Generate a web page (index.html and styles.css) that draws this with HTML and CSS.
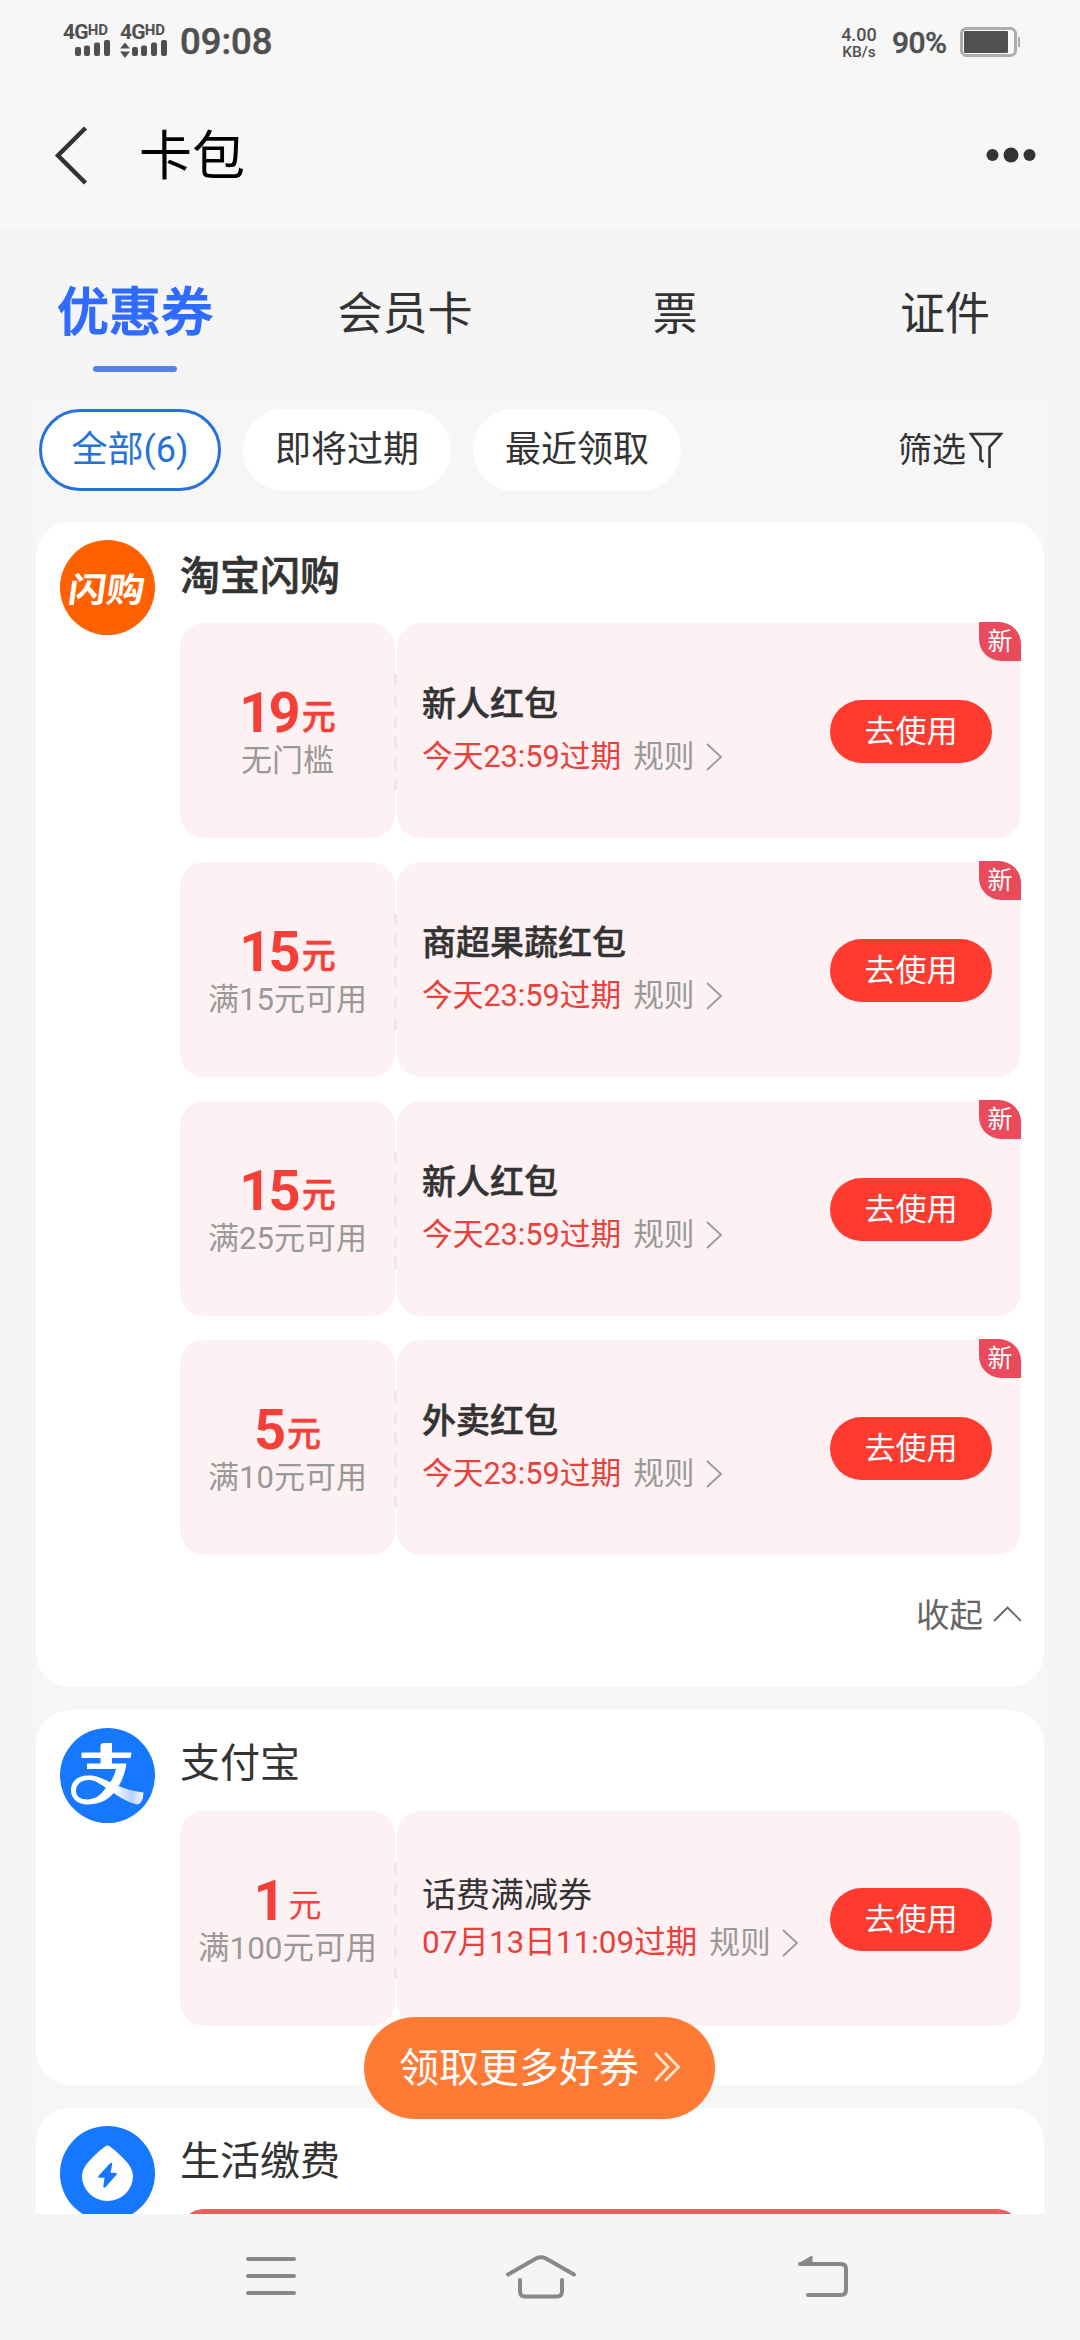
FILE: index.html
```html
<!DOCTYPE html>
<html lang="zh-CN">
<head>
<meta charset="utf-8">
<title>卡包</title>
<link rel="stylesheet" href="styles.css">
</head>
<body>
<div class="screen">
  <header class="status">
    <div class="sim">
      <div class="net">4G<span class="hd">HD</span></div>
      <svg class="bars" width="49" height="18" viewBox="0 0 49 18"><g fill="#505050"><rect x="12" y="7" width="6" height="9" rx="2"/><rect x="21" y="5.500" width="6" height="10.500" rx="2"/><rect x="31" y="2.500" width="6" height="13.500" rx="2"/><rect x="41" y="0" width="6" height="16" rx="2"/></g></svg>
    </div>
    <div class="sim">
      <div class="net">4G<span class="hd">HD</span></div>
      <svg class="bars" width="49" height="18" viewBox="0 0 49 18"><g fill="#505050"><path d="M0 8.500L5 2.500L10 8.500ZM0 11.500H10L5 18Z"/><rect x="12" y="7" width="6" height="9" rx="2"/><rect x="21" y="5.500" width="6" height="10.500" rx="2"/><rect x="31" y="2.500" width="6" height="13.500" rx="2"/><rect x="41" y="0" width="6" height="16" rx="2"/></g></svg>
    </div>
    <div class="time">09:08</div>
    <div class="speed"><span class="rate">4.00</span><span class="unit">KB/s</span></div>
    <div class="percent">90%</div>
    <svg class="battery" width="61" height="30" viewBox="0 0 61 30"><rect x="1.500" y="1.500" width="54" height="27" rx="5" fill="#fafafa" stroke="#adadad" stroke-width="3"/><rect x="4" y="4" width="44" height="22" rx="1" fill="#505050"/><rect x="58" y="10" width="2" height="10" fill="#adadad"/></svg>
  </header>

  <nav class="titlebar">
    <svg width="36" height="60" viewBox="0 0 36 60"><path d="M32.500 3L5 30.500L32.500 58" fill="none" stroke="#333" stroke-width="4.500"/></svg>
    <h1>卡包</h1>
    <svg class="more" width="50" height="16" viewBox="0 0 50 16"><g fill="#333"><circle cx="6.500" cy="8" r="6"/><circle cx="25" cy="8" r="7.500"/><circle cx="43.500" cy="8" r="6"/></g></svg>
  </nav>

  <div class="tabs">
    <div class="tab active">优惠券</div>
    <div class="tab">会员卡</div>
    <div class="tab">票</div>
    <div class="tab">证件</div>
  </div>

  <main class="content">
    <div class="filters">
      <div class="chip chosen">全部(6)</div>
      <div class="chip">即将过期</div>
      <div class="chip">最近领取</div>
      <div class="filter"><span>筛选</span><svg width="34" height="38" viewBox="0 0 34 38"><path d="M14.500 31L11.500 28.500V16L2 3H32L20.500 16V37" fill="none" stroke="#333" stroke-width="2.600"/></svg></div>
    </div>

    <section class="card shop">
      <div class="logo flash"><span>闪购</span></div>
      <div class="body">
        <h2 class="strong">淘宝闪购</h2>
        <div class="coupons">
          <article class="coupon">
            <div class="value"><div class="price"><b>19</b><i>元</i></div><div class="limit">无门槛</div></div>
            <div class="info"><div class="text"><h3>新人红包</h3><p>今天23:59过期<span class="rule">规则</span><svg width="18" height="28" viewBox="0 0 18 28"><path d="M2 1L16 14L2 27" fill="none" stroke="#999" stroke-width="1.800"/></svg></p></div><button>去使用</button></div>
            <span class="badge">新</span>
          </article>
          <article class="coupon">
            <div class="value"><div class="price"><b>15</b><i>元</i></div><div class="limit">满15元可用</div></div>
            <div class="info"><div class="text"><h3>商超果蔬红包</h3><p>今天23:59过期<span class="rule">规则</span><svg width="18" height="28" viewBox="0 0 18 28"><path d="M2 1L16 14L2 27" fill="none" stroke="#999" stroke-width="1.800"/></svg></p></div><button>去使用</button></div>
            <span class="badge">新</span>
          </article>
          <article class="coupon">
            <div class="value"><div class="price"><b>15</b><i>元</i></div><div class="limit">满25元可用</div></div>
            <div class="info"><div class="text"><h3>新人红包</h3><p>今天23:59过期<span class="rule">规则</span><svg width="18" height="28" viewBox="0 0 18 28"><path d="M2 1L16 14L2 27" fill="none" stroke="#999" stroke-width="1.800"/></svg></p></div><button>去使用</button></div>
            <span class="badge">新</span>
          </article>
          <article class="coupon">
            <div class="value"><div class="price"><b>5</b><i>元</i></div><div class="limit">满10元可用</div></div>
            <div class="info"><div class="text"><h3>外卖红包</h3><p>今天23:59过期<span class="rule">规则</span><svg width="18" height="28" viewBox="0 0 18 28"><path d="M2 1L16 14L2 27" fill="none" stroke="#999" stroke-width="1.800"/></svg></p></div><button>去使用</button></div>
            <span class="badge">新</span>
          </article>
        </div>
        <div class="collapse"><span>收起</span><svg width="28" height="16" viewBox="0 0 28 16"><path d="M1 15L14.500 1.500L28 15" fill="none" stroke="#666" stroke-width="1.900"/></svg></div>
      </div>
    </section>

    <section class="card pay">
      <svg class="logo" width="95" height="95" viewBox="0 0 95 95">
        <defs><linearGradient id="tail" x1="0" x2="1"><stop offset="0.450" stop-color="#fff"/><stop offset="0.780" stop-color="#b9d2ff"/><stop offset="1" stop-color="#f4f8ff"/></linearGradient></defs>
        <circle cx="47.500" cy="47.500" r="47.500" fill="#1677ff"/>
        <path d="M40.500 17Q41 15 44 15H52V24.500H71.500L70.500 30H52V35.500H66.500C65 46 61 55 56.500 61.500C50 71 41 76 29 76.500C17 77 11 70 11 62.500C11 53 18 47.500 28 47.500C36 47.500 43 51 50 54.500C53 50.500 55 45.500 56 41H27V35.500H40.500V30H21.500V24.500H40.500ZM29 52C21 52 16 56.500 16 63C16 68 20 71.500 28 71.500C36 71 42 66 46 59.500C40 55.500 35 52 29 52Z" fill="#fff" fill-rule="evenodd"/>
        <path d="M29 47.500C44 47.500 54 61 83.500 64.500Q83 76 77 76.500C61 73 47 59 39 55.500Z" fill="url(#tail)"/>
      </svg>
      <div class="body">
        <h2>支付宝</h2>
        <div class="coupons">
          <article class="coupon plain">
            <div class="value"><div class="price"><b>1</b><i>元</i></div><div class="limit">满100元可用</div></div>
            <div class="info"><div class="text"><h3>话费满减券</h3><p>07月13日11:09过期<span class="rule">规则</span><svg width="18" height="28" viewBox="0 0 18 28"><path d="M2 1L16 14L2 27" fill="none" stroke="#999" stroke-width="1.800"/></svg></p></div><button>去使用</button></div>
          </article>
        </div>
      </div>
    </section>

    <section class="card life">
      <svg class="logo" width="95" height="95" viewBox="0 0 95 95"><circle cx="47.500" cy="47.500" r="47.500" fill="#1677ff"/><path d="M47.500 19.500Q50 19.500 60 29C68.500 37 73 43 73 50A25.500 25 0 0 1 22 50C22 43 26.500 37 35 29Q45 19.500 47.500 19.500Z" fill="#fff"/><path d="M51 38L39.500 50.500H46L44.500 60.500L55.500 48H49Z" fill="#1677ff" stroke="#1677ff" stroke-width="2.500" stroke-linejoin="round"/></svg>
      <div class="body">
        <h2>生活缴费</h2>
        <div class="redcoupon"></div>
      </div>
    </section>
  </main>

  <footer class="sysnav">
    <svg width="50" height="40" viewBox="0 0 50 40"><path d="M2 3H48M2 20H48M2 37H48" stroke="#888" stroke-width="4" stroke-linecap="round"/></svg>
    <svg width="72" height="46" viewBox="0 0 72 46"><g fill="none" stroke="#888" stroke-width="4" stroke-linecap="round"><path d="M3 21.500L31 5.500Q36 3 41 5.500L69 21.500"/><path d="M15 27V38Q15 43.500 20 43.500H52Q57 43.500 57 38V27"/></g></svg>
    <svg width="52" height="42" viewBox="0 0 52 42"><path d="M3 9H44Q49 9 49 14V35Q49 40 44 40H11" fill="none" stroke="#888" stroke-width="4" stroke-linecap="round"/><path d="M2 8.500L15 1V9Z" fill="#888" stroke="#888" stroke-linejoin="round"/></svg>
  </footer>

  <a class="getmore"><span>领取更多好券</span><svg width="28" height="30" viewBox="0 0 28 30"><path d="M2 1L15 15L2 29M12 1L25.500 15L12 29" fill="none" stroke="#ffe6d0" stroke-width="2.700"/></svg></a>
</div>
</body>
</html>
```

FILE: styles.css
```css
* { box-sizing: border-box; margin: 0; padding: 0; }
body {
  width: 1080px;
  background: #f5f5f5;
  color: #333;
  font-family: Roboto, "Noto Sans CJK SC", sans-serif;
}
svg { display: block; flex: none; }
.screen {
  position: relative;
  display: flex;
  flex-direction: column;
  width: 1080px;
  height: 2340px;
  overflow: hidden;
}

/* status bar */
.status {
  display: flex;
  align-items: flex-start;
  height: 84px;
  padding: 22px 59px 0 63px;
  background: #f7f7f7;
  color: #505050;
  font-weight: 500;
}
.sim { width: 57px; }
.net {
  display: flex;
  height: 18px;
  font-size: 21px;
  line-height: 21px;
  font-weight: 700;
  letter-spacing: -0.800px;
}
.hd { font-size: 15px; line-height: 16px; letter-spacing: 0; }
.time { margin-left: 3px; font-size: 36.500px; line-height: 40px; -webkit-text-stroke: 0.500px; }
.speed {
  display: flex;
  flex-direction: column;
  align-items: center;
  width: 36px;
  margin: 3px 15px 0 auto;
}
.rate { font-size: 18px; line-height: 19px; }
.unit { font-size: 15.500px; line-height: 17px; }
.percent { width: 54px; font-size: 30px; line-height: 41px; letter-spacing: -0.500px; -webkit-text-stroke: 0.400px; }
.battery { margin: 5px 0 0 14px; }

/* page title */
.titlebar {
  display: flex;
  align-items: center;
  height: 147px;
  padding: 0 44px 4px 53px;
  background: #f7f7f7;
  border-bottom: 2px solid #f3f3f3;
}
.titlebar h1 { margin: 4px 0 0 50px; font-size: 53px; line-height: 60px; font-weight: 400; color: #000; }
.more { margin-left: auto; }

.tabs {
  display: grid;
  grid-template-columns: repeat(4, 270px);
  height: 169px;
  padding-top: 55px;
}
.tab { padding-top: 1px; text-align: center; font-size: 45px; line-height: 56px; }
.tab.active { padding-top: 0; font-size: 52px; font-weight: 500; color: #2f6bff; -webkit-text-stroke: 1.200px; }
.tab.active::after {
  content: "";
  display: block;
  width: 84px;
  height: 6px;
  margin: 24px auto 0;
  border-radius: 3px;
  background: #5283f0;
}

/* scrolling content */
.content {
  height: 1814px;
  margin: 0 34px;
  padding: 9px 2px 0;
  overflow: hidden;
  background: #f6f6f6;
}
.filters { display: flex; height: 82px; margin-bottom: 31px; padding: 0 41px 0 3px; }
.chip {
  width: 208px;
  margin-right: 22px;
  border-radius: 41px;
  background: #fff;
  text-align: center;
  font-size: 36px;
  line-height: 82px;
}
.chip.chosen { width: 182px; border: 3px solid #2472da; line-height: 76px; color: #2472da; }
.filter { display: flex; align-items: center; gap: 3px; margin-left: auto; font-size: 34px; }
.filter span { padding-bottom: 5px; }
.filter svg { margin-bottom: 1px; }

.card {
  display: flex;
  align-items: flex-start;
  margin-bottom: 23px;
  padding: 18px 23px 0 24px;
  border-radius: 34px;
  background: #fff;
}
.shop { height: 1165px; }
.pay { height: 375px; }
.life { height: 374px; }
.logo { flex: none; width: 95px; height: 95px; margin-right: 25px; }
.flash {
  display: flex;
  align-items: center;
  justify-content: center;
  border-radius: 50%;
  background: #ff6000;
  color: #fff;
  font-size: 38px;
  font-weight: 700;
}
.flash span { transform: skewX(-8deg) scaleY(0.900); }
.body { flex: 1; }
h2 { height: 83px; padding-top: 8px; font-size: 40px; line-height: 56px; font-weight: 400; }
h2.strong { padding-top: 9px; font-weight: 500; -webkit-text-stroke: 0.700px; }
.coupons { display: flex; flex-direction: column; gap: 24px; }
.coupon { position: relative; display: flex; gap: 2px; height: 215px; }
.coupon::before {
  content: "";
  position: absolute;
  left: 214px;
  top: 51px;
  width: 3px;
  height: 117px;
  background: repeating-linear-gradient(#f3e6e8 0 12px, #fef2f4 12px 21px);
}
.value, .info { border-radius: 24px; background: #fef1f3; }
.value { width: 215px; padding-top: 62px; text-align: center; }
.price {
  display: flex;
  align-items: baseline;
  justify-content: center;
  gap: 4px;
  height: 56px;
  font-size: 34px;
  line-height: 56px;
  font-weight: 500;
  color: #f5403a;
}
.price b { font-size: 56px; font-weight: 700; letter-spacing: -3px; }
.price i { position: relative; top: -3px; font-style: normal; -webkit-text-stroke: 0.500px; }
.limit { font-size: 31px; line-height: 40px; color: #999; }
.info { display: flex; flex: 1; padding: 59px 29px 0 25px; }
h3 { margin-bottom: 9px; font-size: 34px; line-height: 44px; font-weight: 500; -webkit-text-stroke: 0.500px; }
.text p { display: flex; align-items: center; font-size: 30.700px; line-height: 44px; color: #e8403a; }
.rule { margin: 0 10px 0 12px; color: #999; }
button {
  width: 162px;
  height: 63px;
  margin: 18px 0 0 auto;
  border: 0;
  border-radius: 32px;
  background: #ff3a2f;
  color: #fff;
  font: 400 31px/63px Roboto, "Noto Sans CJK SC", sans-serif;
}
.badge {
  position: absolute;
  top: -1px;
  right: 0;
  width: 42px;
  height: 39px;
  border-radius: 0 22px 0 22px;
  background: #e94a5c;
  color: #fff;
  text-align: center;
  font-size: 25px;
  line-height: 40px;
}
.plain .info { padding-top: 62px; }
.plain h3 { margin-bottom: 4px; font-weight: 400; -webkit-text-stroke: 0; }
.plain .text p { font-size: 31.500px; }
.plain .rule { font-size: 30.700px; }
.plain .limit { font-size: 31.500px; }
.plain .price { font-weight: 400; font-size: 33px; gap: 6px; }
.plain .price i { -webkit-text-stroke: 0; }
.plain button { margin-top: 15px; }
.collapse {
  display: flex;
  align-items: center;
  justify-content: flex-end;
  gap: 10px;
  height: 118px;
  font-size: 33.500px;
  color: #666;
}
.collapse span { padding-bottom: 3px; }
.redcoupon { height: 215px; border-radius: 24px; background: #e85f5c; }

.sysnav {
  display: flex;
  align-items: center;
  height: 126px;
  padding: 0 0 2px 246px;
}
.sysnav svg + svg { margin-left: 209px; }
.sysnav svg:last-child { margin-left: 220px; }

/* floating action over the list */
.getmore {
  position: absolute;
  left: 364px;
  top: 2017px;
  display: flex;
  align-items: center;
  gap: 14px;
  width: 351px;
  height: 102px;
  padding-left: 35px;
  border-radius: 51px;
  background: #ff7b35;
  color: #fff;
  font-size: 40px;
}
.getmore span { padding-bottom: 7px; }
.getmore svg { margin-bottom: 2px; }
```
